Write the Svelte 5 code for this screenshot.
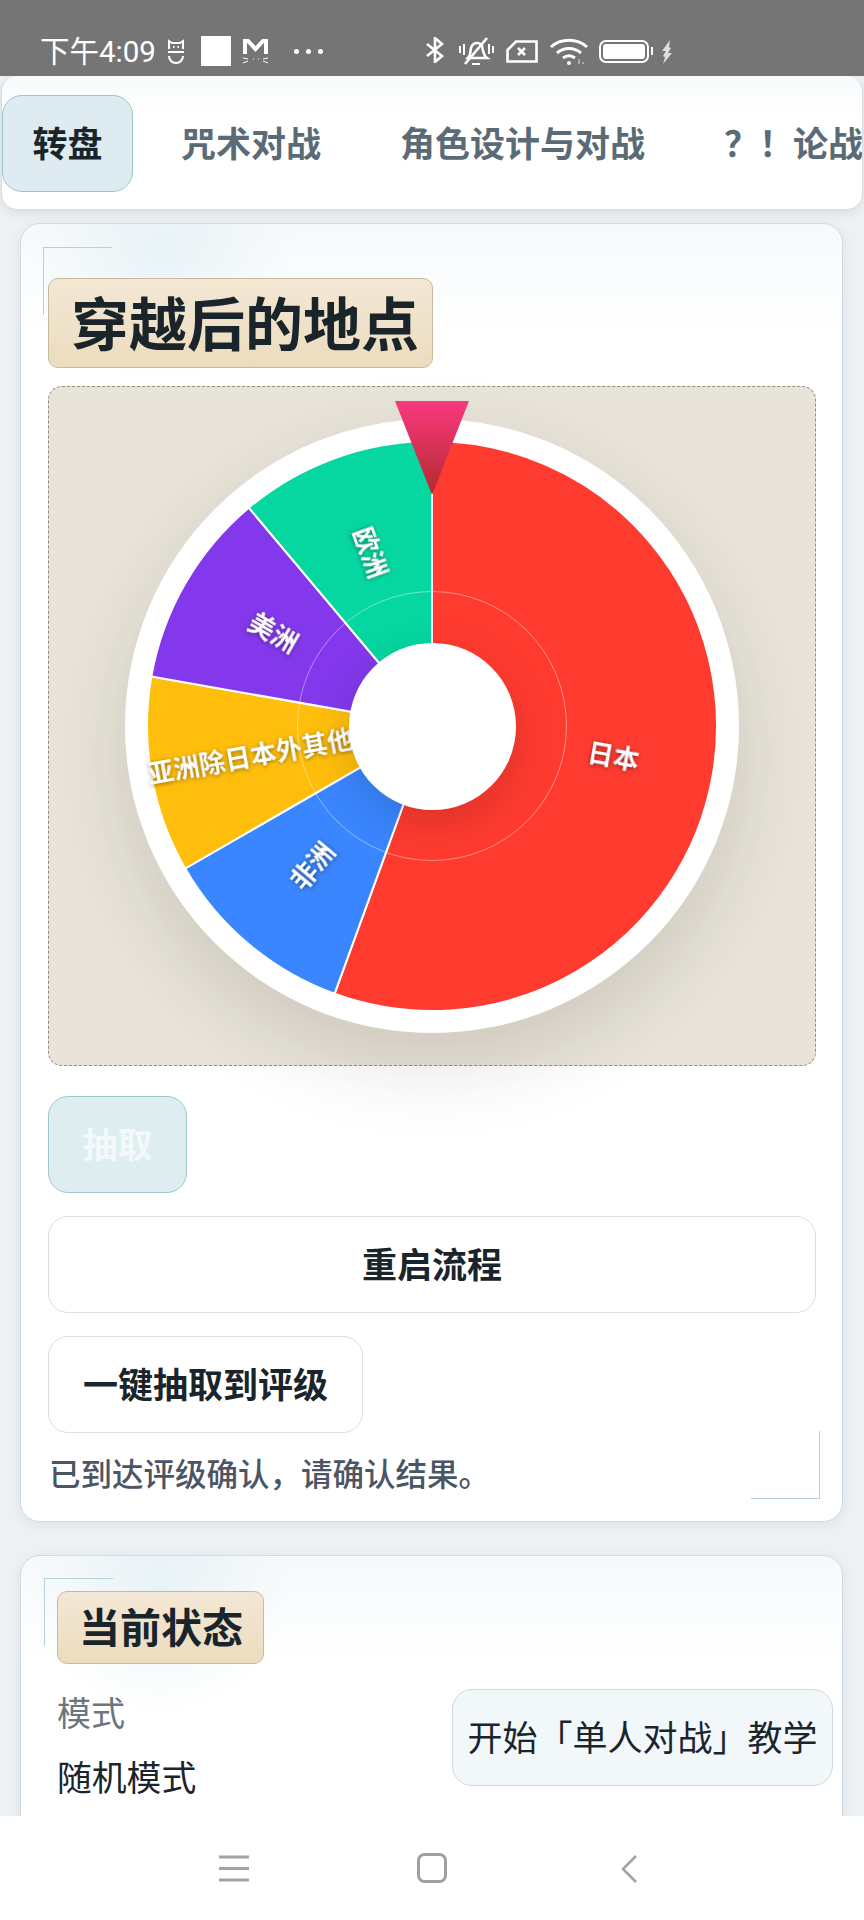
<script>
  const C = 307, R = 285, LABEL_R = 184;
  const segs = [
    { name: '日本', from: 0, to: 200, color: '#ff3b30' },
    { name: '非洲', from: 200, to: 240, color: '#3a86ff' },
    { name: '亚洲除日本外其他', from: 240, to: 280, color: '#ffbe0b' },
    { name: '美洲', from: 280, to: 320, color: '#8338ec' },
    { name: '欧洲', from: 320, to: 360, color: '#06d6a0' }
  ];
  const pt = (deg, r) => {
    const a = (deg * Math.PI) / 180;
    return [C + r * Math.sin(a), C - r * Math.cos(a)];
  };
  const slices = segs.map((s) => {
    const [x1, y1] = pt(s.from, R);
    const [x2, y2] = pt(s.to, R);
    const large = s.to - s.from > 180 ? 1 : 0;
    const mid = (s.from + s.to) / 2;
    const [lx, ly] = pt(mid, LABEL_R);
    const rot = mid < 180 ? mid - 90 : mid + 90;
    return {
      ...s,
      d: `M${C} ${C}L${x1} ${y1}A${R} ${R} 0 ${large} 1 ${x2} ${y2}Z`,
      transform: `translate(${lx} ${ly}) rotate(${rot}) translate(0 -4)`
    };
  });
  const tabs = ['转盘', '咒术对战', '角色设计与对战', '？！ 论战'];
</script>

<div class="screen">
  <header class="status">
    <span class="time">下午4:09</span>
    <svg class="ic cat" viewBox="0 0 18 26" fill="none" stroke="#fff" stroke-width="2"><path d="M2 10V2l3 2h8l3-2v8"/><path d="M1 13h16"/><path d="M2 17c0 4 3 7 7 7s7-3 7-7"/><path d="M6 8h1.500M10.500 8H12"/></svg>
    <span class="square"></span>
    <svg class="ic mail" viewBox="0 0 27 26" fill="none" stroke="#fff"><path d="M3 16V3h3l7.500 8L21 3h3v13" stroke-width="4"/><path d="M1 20l5 1M1 25l5-2M26 20l-5 1M26 25l-5-2M11 21h1M16 21h1" stroke-width="1"/></svg>
    <span class="dots"><i></i><i></i><i></i></span>
    <span class="sys">
      <svg class="ic bt" viewBox="0 0 18 26" fill="none" stroke="#fff" stroke-width="2.600"><path d="M1 7l15 12-7 6V1l7 6L1 19"/></svg>
      <svg class="ic bell" viewBox="0 0 36 29" fill="none" stroke="#fff" stroke-width="2.600"><path d="M10 21c3-3 2-6 3-10 1-3 3-5 6-5 2 0 4 1 5 3 1 4 1 9 5 12z"/><path d="M7 27 29 1" /><path d="M14 27h8M2 9v7M6 7v11M31 7v10M35 9v7" stroke-width="2"/></svg>
      <svg class="ic sim" viewBox="0 0 32 23" fill="none" stroke="#fff" stroke-width="2.600"><path d="M10 1.500h20.500v20H1.500V10z"/><path d="M12 8l7 7M19 8l-7 7"/></svg>
      <svg class="ic wifi" viewBox="0 0 38 27" fill="none" stroke="#fff" stroke-width="3"><path d="M1 9C11 0 27 0 37 9"/><path d="M7 15c7-6 17-6 24 0"/><path d="M13 20c4-3 8-3 12 0"/><circle cx="19" cy="25" r="2" fill="#fff" stroke="none"/><path d="M29 21v5M33 24v2" stroke="#aaa" stroke-width="2"/></svg>
      <span class="battery"><b></b></span>
      <span class="nub"></span>
      <svg class="ic bolt" viewBox="0 0 12 24" fill="#ddd"><path d="M9 0 1 11h4l-3 5 2 1-2 7 9-11H7l3-5-2-1z"/></svg>
    </span>
  </header>

  <main class="page">
    <nav class="tabs">
      {#each tabs as t, i}
        <button class="tab" class:active={i === 0} class:punct={i === 3}>{t}</button>
      {/each}
    </nav>

    <section class="card first">
      <span class="corner tl"></span>
      <span class="corner br"></span>
      <h1 class="title big">穿越后的地点</h1>

      <div class="stage">
        <div class="wheel">
          <svg viewBox="0 0 614 614" width="614" height="614">
            {#each slices as s}
              <path d={s.d} fill={s.color} stroke="#fff" stroke-width="2" />
            {/each}
            {#each slices as s}
              <text class="label" transform={s.transform} text-anchor="middle" dominant-baseline="central">{s.name}</text>
            {/each}
          </svg>
          <span class="ringline"></span>
          <span class="hub"></span>
          <svg class="pointer" viewBox="0 0 74 94" width="74" height="94">
            <defs>
              <linearGradient id="pg" x1="0" y1="0" x2="0" y2="1">
                <stop offset="0" stop-color="#f9387f" />
                <stop offset="1" stop-color="#b32a2c" />
              </linearGradient>
            </defs>
            <path d="M0 0H74L37 94Z" fill="url(#pg)" />
          </svg>
        </div>
      </div>

      <button class="btn draw">抽取</button>
      <button class="btn wide">重启流程</button>
      <button class="btn auto">一键抽取到评级</button>
      <p class="note">已到达评级确认，请确认结果。</p>
    </section>

    <section class="card second">
      <span class="corner tl"></span>
      <h2 class="title small">当前状态</h2>
      <div class="row">
        <div class="mode">
          <div class="k">模式</div>
          <div class="v">随机模式</div>
        </div>
        <button class="guide">开始「单人对战」教学</button>
      </div>
    </section>
  </main>

  <footer class="navbar">
    <svg class="hamb" viewBox="0 0 30 27" fill="none" stroke="#a3a3a3" stroke-width="3"><path d="M0 2h30M0 13.500h30M0 25h30"/></svg>
    <svg class="home" viewBox="0 0 30 30" fill="none" stroke="#a0a0a0" stroke-width="3"><rect x="1.500" y="1.500" width="27" height="27" rx="6"/></svg>
    <svg class="back" viewBox="0 0 16 28" fill="none" stroke="#a3a3a3" stroke-width="2.600"><path d="M15 1 2 14l13 13"/></svg>
  </footer>
</div>

<style>
  :global(body) {
    margin: 0;
    background: #fff;
  }
  .screen {
    width: 864px;
    height: 1920px;
    display: flex;
    flex-direction: column;
    overflow: hidden;
    font-family: "Noto Sans CJK SC", "Noto Sans", sans-serif;
    color: #1a242b;
  }
  button {
    font-family: inherit;
    color: inherit;
    margin: 0;
    box-sizing: border-box;
  }

  .status {
    height: 76px;
    flex: none;
    box-sizing: border-box;
    background: #757575;
    padding: 36px 0 0 40px;
    display: flex;
    align-items: flex-start;
    color: #fff;
  }
  .time {
    font-family: Roboto, "Noto Sans CJK SC", sans-serif;
    font-size: 29.500px;
    line-height: 32px;
    width: 127px;
    flex: none;
    white-space: nowrap;
  }
  .ic {
    display: block;
    flex: none;
  }
  .cat {
    width: 18px;
    height: 26px;
    margin-top: 3px;
  }
  .square {
    width: 30px;
    height: 30px;
    background: #fff;
    margin-left: 16px;
    flex: none;
  }
  .mail {
    width: 27px;
    height: 26px;
    margin: 2px 0 0 11px;
  }
  .dots {
    display: flex;
    gap: 7px;
    margin: 13px 0 0 25px;
    flex: none;
  }
  .dots i {
    width: 5px;
    height: 5px;
    border-radius: 50%;
    background: #fff;
  }
  .sys {
    display: flex;
    margin-left: 103px;
    align-items: flex-start;
  }
  .bt {
    width: 18px;
    height: 26px;
    margin-top: 1px;
  }
  .bell {
    width: 36px;
    height: 29px;
    margin: 1px 0 0 14px;
  }
  .sim {
    width: 32px;
    height: 23px;
    margin: 4px 0 0 12px;
  }
  .wifi {
    width: 38px;
    height: 27px;
    margin: 2px 0 0 12px;
  }
  .battery {
    width: 50px;
    height: 23px;
    box-sizing: border-box;
    border: 2.500px solid #fff;
    border-radius: 7px;
    padding: 2px;
    margin: 4px 0 0 11px;
    display: flex;
  }
  .battery b {
    flex: 1;
    background: #fff;
    border-radius: 3px;
  }
  .nub {
    width: 2px;
    height: 8px;
    background: #fff;
    margin: 11px 0 0 2px;
  }
  .bolt {
    width: 12px;
    height: 24px;
    margin: 4px 0 0 8px;
  }

  .page {
    flex: 1;
    min-height: 0;
    overflow: hidden;
    background: #edf1f4;
    padding-left: 1px;
    padding-right: 1px;
  }
  .tabs {
    height: 134px;
    box-sizing: border-box;
    background: linear-gradient(#f8fafb, #fff 30%);
    border: 1px solid #d6dee3;
    border-top: 0;
    border-radius: 16px;
    box-shadow: 0 3px 10px rgba(120, 135, 150, 0.18);
    display: flex;
    align-items: flex-start;
    gap: 17px;
    padding: 19px 0 0 0;
    overflow: hidden;
  }
  .tab {
    height: 97px;
    flex: none;
    padding: 0 30px 4px;
    border: 1px solid transparent;
    border-radius: 20px;
    background: none;
    font-size: 35px;
    font-weight: 700;
    color: #5b6b76;
    white-space: nowrap;
    line-height: 1;
  }
  .tab.active {
    background: #deebf0;
    border-color: #9cc6cf;
    color: #1a242b;
    padding: 0 29.500px 4px;
  }
  .tab.punct {
    word-spacing: -9px;
  }

  .card {
    position: relative;
    box-sizing: border-box;
    width: 823px;
    margin-left: 19px;
    background:
      radial-gradient(circle at 140px 30px, rgba(222, 238, 243, 0.6), rgba(222, 238, 243, 0) 130px),
      linear-gradient(#f6f9fb, #fff 110px);
    border: 1px solid #d2dade;
    border-radius: 20px;
    box-shadow: 0 3px 12px rgba(130, 145, 160, 0.16);
  }
  .first {
    height: 1299px;
    margin-top: 13px;
    padding: 54px 27px 0 27px;
  }
  .second {
    margin-top: 33px;
    height: 420px;
    padding: 35px 9px 0 36px;
  }
  .corner {
    position: absolute;
    width: 68px;
    height: 67px;
    border: 0 solid #b5d2d9;
  }
  .tl {
    left: 22px;
    top: 23px;
    border-width: 1.500px 0 0 1.500px;
  }
  .br {
    right: 22px;
    bottom: 22px;
    border-width: 0 1.500px 1.500px 0;
  }
  .second .tl {
    left: 23px;
    top: 22px;
  }
  .title {
    display: block;
    position: relative;
    box-sizing: border-box;
    margin: 0;
    background: linear-gradient(#f3e8d5, #ecdcbe);
    border: 1px solid #c7b99c;
    border-radius: 10px;
    font-weight: 700;
    line-height: 1;
    white-space: nowrap;
  }
  .big {
    height: 90px;
    width: 385px;
    padding: 13px 0 0 22px;
    font-size: 58px;
  }
  .small {
    height: 73px;
    width: 207px;
    padding: 13px 0 0 21px;
    font-size: 41px;
  }

  .stage {
    margin-top: 18px;
    height: 680px;
    width: 768px;
    box-sizing: border-box;
    border: 1px dashed #948d80;
    border-radius: 14px;
    background: #e8e4d9;
    display: flex;
    align-items: center;
    justify-content: center;
  }
  .wheel {
    position: relative;
    width: 614px;
    height: 614px;
    border-radius: 50%;
    background: #fff;
    box-shadow: 0 30px 80px rgba(60, 50, 30, 0.15);
  }
  .wheel > svg:first-child {
    display: block;
  }
  .label {
    fill: #fff;
    font-size: 26px;
    font-weight: 700;
    filter: drop-shadow(0 1px 2px rgba(0, 0, 0, 0.45));
  }
  .ringline {
    position: absolute;
    left: 172px;
    top: 172px;
    width: 270px;
    height: 270px;
    box-sizing: border-box;
    border-radius: 50%;
    border: 1.500px solid rgba(255, 255, 255, 0.42);
  }
  .hub {
    position: absolute;
    left: 223.500px;
    top: 223.500px;
    width: 167px;
    height: 167px;
    border-radius: 50%;
    background: #fff;
    box-shadow: 0 14px 44px rgba(0, 0, 0, 0.14);
  }
  .pointer {
    position: absolute;
    left: 270px;
    top: -18px;
  }

  .btn {
    display: block;
    height: 97px;
    background: #fff;
    border: 1px solid #d9dee1;
    border-radius: 20px;
    font-size: 35px;
    font-weight: 700;
    line-height: 1;
    padding: 0 0 5px;
  }
  .draw {
    width: 139px;
    margin-top: 30px;
    background: #deeef0;
    border-color: #9cc8cf;
    color: #f3f9fa;
  }
  .wide {
    width: 768px;
    margin-top: 23px;
  }
  .auto {
    width: 315px;
    margin-top: 23px;
  }
  .note {
    margin: 17px 0 0 1px;
    font-size: 31.500px;
    line-height: 44px;
    font-weight: 500;
    color: #4b5563;
    white-space: nowrap;
  }
  .row {
    display: flex;
    justify-content: space-between;
    align-items: flex-start;
    margin-top: 25px;
  }
  .mode {
    margin-top: 1px;
  }
  .k {
    font-size: 34px;
    line-height: 44px;
    color: #6b7680;
  }
  .v {
    font-size: 34.800px;
    line-height: 44px;
    margin-top: 20px;
  }
  .guide {
    width: 381px;
    height: 97px;
    padding: 0 0 4px;
    background: #f2f7fa;
    border: 1px solid #cfd9dd;
    border-radius: 20px;
    font-size: 35px;
    font-weight: 400;
    line-height: 1;
    white-space: nowrap;
  }

  .navbar {
    height: 104px;
    flex: none;
    position: relative;
    z-index: 1;
    background: #fff;
    display: flex;
    align-items: flex-start;
    padding: 39px 0 0 219px;
    box-sizing: border-box;
  }
  .hamb {
    width: 30px;
    height: 27px;
  }
  .home {
    width: 30px;
    height: 30px;
    margin: -2px 0 0 168px;
  }
  .back {
    width: 16px;
    height: 28px;
    margin-left: 174px;
  }
</style>
